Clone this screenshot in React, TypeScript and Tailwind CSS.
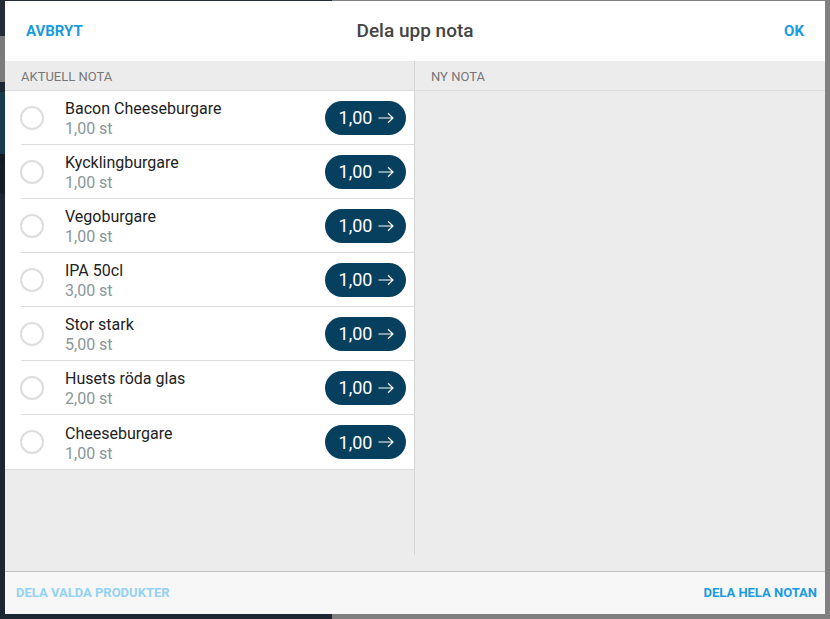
import React from "react";

interface Rad {
  namn: string;
  antal: string;
}

const RADER: Rad[] = [
  { namn: "Bacon Cheeseburgare", antal: "1,00 st" },
  { namn: "Kycklingburgare", antal: "1,00 st" },
  { namn: "Vegoburgare", antal: "1,00 st" },
  { namn: "IPA 50cl", antal: "3,00 st" },
  { namn: "Stor stark", antal: "5,00 st" },
  { namn: "Husets röda glas", antal: "2,00 st" },
  { namn: "Cheeseburgare", antal: "1,00 st" },
];

function Pil() {
  return (
    <svg width="16" height="12" viewBox="0 0 16 12" fill="none" stroke="currentColor" strokeWidth="1.2">
      <path d="M0.5 6H15M10 1.2L15 6L10 10.8" />
    </svg>
  );
}

export default function App() {
  return (
    <div
      className="relative w-[830px] h-[619px] overflow-hidden flex"
      style={{ fontFamily: "Roboto, 'Liberation Sans', sans-serif" }}
    >
      {/* Bakgrund (dimmad sida) */}
      <div className="w-[332px] h-full bg-[#1c2733] flex flex-col">
        <div className="h-[36px] bg-[#242c37]" />
        <div className="h-[46px] bg-[#7b7b7b]" />
        <div className="h-[10px] bg-[#1c2733]" />
        <div className="h-[62px] bg-[#173d4c]" />
        <div className="h-[10px] bg-[#121a24]" />
        <div className="h-[30px] bg-[#151d27]" />
        <div className="flex-1" />
      </div>
      <div className="flex-1 h-full bg-[#808080]" />

      {/* Dialog */}
      <div className="absolute left-[5px] top-[1px] w-[820px] h-[613px] flex flex-col bg-white">
        {/* Toppfält */}
        <div className="h-[60px] flex items-center justify-between px-[21px]">
          <button className="w-[60px] text-left text-[15px] font-bold text-[#1a9be0]">AVBRYT</button>
          <h2 className="text-[19px] font-medium text-[#444]">Dela upp nota</h2>
          <button className="w-[60px] text-right text-[15px] font-bold text-[#1a9be0]">OK</button>
        </div>

        {/* Innehåll */}
        <div className="h-[510px] bg-[#ececec] pb-[16px] flex">
          <div className="w-[410px] h-full border-r border-[#d6d6d6] flex flex-col">
            <div className="h-[30px] border-b border-[#dcdcdc] flex items-center pl-[16px] pt-[2px] text-[13px] text-[#777]">
              AKTUELL NOTA
            </div>
            <div className="bg-white border-b border-[#dcdcdc]">
              {RADER.map((rad, i) => (
                <div key={rad.namn} className="pl-[16px]">
                  <div
                    className={`h-[54px] flex items-center pr-[8px] ${
                      i < RADER.length - 1 ? "border-b border-[#dcdcdc]" : ""
                    }`}
                  >
                    <span className="w-[24px] h-[24px] rounded-full border-2 border-[#dddddd] shrink-0 -ml-px" />
                    <div className="ml-[21px] flex-1 leading-[20px] text-[16px] pt-[3px]">
                      <p className="text-[#222]">{rad.namn}</p>
                      <p className="text-[#8a9699]">{rad.antal}</p>
                    </div>
                    <button className="w-[81px] h-[34px] rounded-full bg-[#073f5f] text-white text-[18px] flex items-center justify-center gap-[6px] pl-[2px]">
                      <span>1,00</span>
                      <Pil />
                    </button>
                  </div>
                </div>
              ))}
            </div>
          </div>
          <div className="flex-1 h-full flex flex-col">
            <div className="h-[30px] border-b border-[#dcdcdc] flex items-center pl-[16px] pt-[2px] text-[13px] text-[#777]">
              NY NOTA
            </div>
          </div>
        </div>

        {/* Sidfot */}
        <div className="h-[43px] border-t border-[#bdbdbd] bg-[#f7f7f7] flex items-center justify-between pl-[11px] pr-[8px]">
          <button className="text-[13px] font-bold text-[#93d2f2]">DELA VALDA PRODUKTER</button>
          <button className="text-[13px] font-bold text-[#1a9be0]">DELA HELA NOTAN</button>
        </div>
      </div>
    </div>
  );
}
